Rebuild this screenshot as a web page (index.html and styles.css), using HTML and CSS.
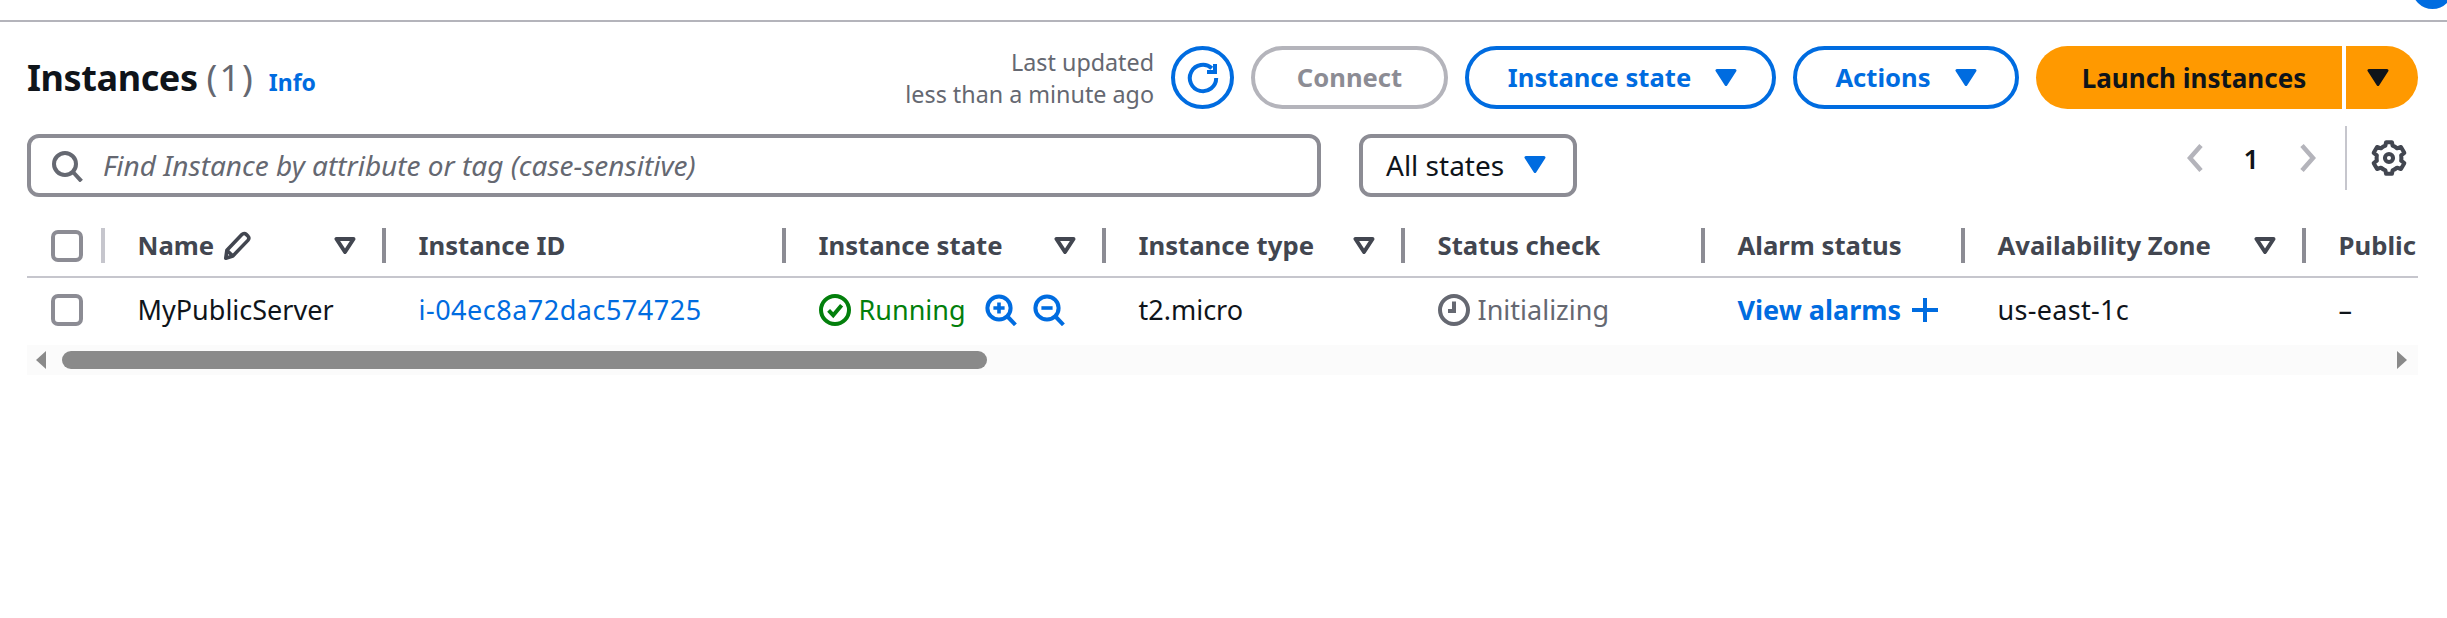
FILE: index.html
```html
<!DOCTYPE html>
<html lang="en">
<head>
  <meta charset="UTF-8" />
  <title>Instances</title>
  <link rel="stylesheet" href="styles.css">
</head>
<body>

  <div class="topbar"><span class="avatar"></span></div>

  <svg class="defs" aria-hidden="true">
    <symbol id="caret" viewBox="0 0 22 17"><path d="M2 1.5h18L11 15.5z" fill="currentColor" stroke="currentColor" stroke-width="3" stroke-linejoin="round"/></symbol>
    <symbol id="sort" viewBox="0 0 22 17"><path d="M2.5 2h17L11 15z" fill="none" stroke="currentColor" stroke-width="4" stroke-linejoin="round"/></symbol>
    <symbol id="check" viewBox="0 0 32 32"><rect x="2" y="2" width="28" height="28" rx="5" fill="#fff" stroke="currentColor" stroke-width="4"/></symbol>
  </svg>

  <main class="panel">
    <div class="head-row">
      <h1 class="title">Instances <span class="count">(1)</span><a class="info">Info</a></h1>
      <div class="actions">
        <div class="updated">Last updated<br>less than a minute ago</div>
        <button class="btn btn-round">
          <svg viewBox="0 0 16 16" width="32" height="32" fill="none" stroke="currentColor" stroke-width="2"><path d="M14.6 8a6.6 6.6 0 1 1-2.2-4.9"/><path d="M14 1v4h-4"/></svg>
        </button>
        <button class="btn btn-off w-connect">Connect</button>
        <button class="btn w-state">Instance state <svg class="caret"><use href="#caret"/></svg></button>
        <button class="btn w-actions">Actions <svg class="caret"><use href="#caret"/></svg></button>
        <div class="split">
          <button class="btn-primary w-launch">Launch instances</button>
          <button class="btn-primary w-drop"><svg class="caret"><use href="#caret"/></svg></button>
        </div>
      </div>
    </div>

    <div class="filter-row">
      <div class="search">
        <svg viewBox="0 0 16 16" width="32" height="32" fill="none" stroke="currentColor" stroke-width="2"><circle cx="7" cy="7" r="5.5"/><path d="M11 11l4.2 4.6"/></svg>
        <span>Find Instance by attribute or tag (case-sensitive)</span>
      </div>
      <div class="select">All states <svg class="caret"><use href="#caret"/></svg></div>
      <div class="pager">
        <svg class="chev" viewBox="0 0 16 28" fill="none" stroke="currentColor" stroke-width="4.5"><path d="M14 1.5L3 14l11 12.5"/></svg>
        <span class="page-num">1</span>
        <svg class="chev" viewBox="0 0 16 28" fill="none" stroke="currentColor" stroke-width="4.5"><path d="M2 1.5L13 14 2 26.5"/></svg>
        <span class="pager-line"></span>
        <svg class="gear" viewBox="0 0 16 16" width="36" height="36" fill="none" stroke="currentColor" stroke-width="1.8" stroke-linejoin="round"><path d="M13.5 8c0-.4 0-.8-.1-1.2l1.4-1.1-1.5-2.6-1.7.6c-.6-.5-1.3-.9-2-1.2L9.3 1H6.7l-.3 1.5c-.7.3-1.4.7-2 1.2l-1.7-.6-1.5 2.6 1.4 1.1c-.1.4-.1.8-.1 1.2s0 .8.1 1.2l-1.4 1.1 1.5 2.6 1.7-.6c.6.5 1.3.9 2 1.2l.3 1.5h2.6l.3-1.5c.7-.3 1.4-.7 2-1.2l1.7.6 1.5-2.6-1.4-1.1c.1-.4.1-.8.1-1.2z"/><circle cx="8" cy="8" r="1.8"/></svg>
      </div>
    </div>

    <table class="grid">
      <colgroup>
        <col class="c-check"><col class="c-name"><col class="c-id"><col class="c-state"><col class="c-type"><col class="c-status"><col class="c-alarm"><col class="c-zone"><col class="c-public">
      </colgroup>
      <thead>
        <tr>
          <th><div class="th first"><svg class="box"><use href="#check"/></svg></div></th>
          <th><div class="th">Name
            <svg class="pencil" viewBox="0 0 16 16" width="30" height="30" fill="none" stroke="currentColor" stroke-width="1.9" stroke-linejoin="round"><path d="M2 14.5l.6-4.2 8-8.4c.7-.7 1.7-.7 2.3-.1l.9.9c.6.6.6 1.6 0 2.3l-8 8.3z"/><path d="M2.7 10.4l3.1 3"/></svg>
            <svg class="sort"><use href="#sort"/></svg></div></th>
          <th><div class="th">Instance ID</div></th>
          <th><div class="th">Instance state <svg class="sort"><use href="#sort"/></svg></div></th>
          <th><div class="th">Instance type <svg class="sort"><use href="#sort"/></svg></div></th>
          <th><div class="th">Status check</div></th>
          <th><div class="th">Alarm status</div></th>
          <th><div class="th">Availability Zone <svg class="sort"><use href="#sort"/></svg></div></th>
          <th><div class="th last">Public</div></th>
        </tr>
      </thead>
      <tbody>
        <tr>
          <td><svg class="box"><use href="#check"/></svg></td>
          <td>MyPublicServer</td>
          <td><a class="link">i-04ec8a72dac574725</a></td>
          <td>
            <div class="cell running">
              <svg viewBox="0 0 16 16" width="32" height="32" fill="none" stroke="currentColor" stroke-width="2"><circle cx="8" cy="8" r="7"/><path d="M4.8 8.2l2.3 2.4 4.2-5"/></svg>
              <span class="running-text">Running</span>
              <svg class="zoom-in" viewBox="0 0 16 16" width="32" height="32" fill="none" stroke="#006ce0" stroke-width="2"><circle cx="7" cy="7" r="5.8"/><path d="M11 11l4.2 4.4"/><path d="M4.2 7h5.6M7 4.2v5.6" stroke-width="1.8"/></svg>
              <svg class="zoom-out" viewBox="0 0 16 16" width="32" height="32" fill="none" stroke="#006ce0" stroke-width="2"><circle cx="7" cy="7" r="5.8"/><path d="M11 11l4.2 4.4"/><path d="M4.2 7h5.6" stroke-width="1.8"/></svg>
            </div>
          </td>
          <td>t2.micro</td>
          <td>
            <div class="cell pending">
              <svg viewBox="0 0 16 16" width="32" height="32" fill="none" stroke="currentColor" stroke-width="2"><circle cx="8" cy="8" r="7"/><path d="M8 3.8v4.7H5"/></svg>
              <span>Initializing</span>
            </div>
          </td>
          <td>
            <div class="cell alarms">View alarms
              <svg viewBox="0 0 26 24" width="26" height="24" fill="none" stroke="currentColor" stroke-width="4"><path d="M0 12h26M13 0v24"/></svg>
            </div>
          </td>
          <td class="zone">us-east-1c</td>
          <td>–</td>
        </tr>
      </tbody>
    </table>

    <div class="scrollbar">
      <span class="arrow arrow-left"></span>
      <span class="thumb"></span>
      <span class="arrow arrow-right"></span>
    </div>
  </main>

</body>
</html>
```
FILE: styles.css
```css
* {
  box-sizing: border-box;
}

html, body {
  height: 100%;
}

body {
  margin: 0;
  background: #fff;
  color: #0f141a;
  font-family: "Noto Sans", "Open Sans", sans-serif;
  font-size: 27px;
  overflow: hidden;
}

.defs {
  position: absolute;
  width: 0;
  height: 0;
}

.topbar {
  height: 22px;
  border-bottom: 2px solid #b4b4bb;
  position: relative;
  overflow: hidden;
}

.avatar {
  position: absolute;
  left: 2412px;
  top: -32px;
  width: 41px;
  height: 41px;
  border-radius: 50%;
  background: #006ce0;
}

.panel {
  padding: 24px 29px 0 27px;
}

/* first row */
.head-row {
  display: flex;
  align-items: center;
  height: 63px;
}

.title {
  margin: 0;
  font-size: 36px;
  font-weight: 700;
  letter-spacing: -0.4px;
  white-space: nowrap;
}

.count {
  font-weight: 400;
  letter-spacing: 2px;
  color: #656871;
}

.info {
  margin-left: 14px;
  font-size: 23px;
  letter-spacing: 0;
  color: #006ce0;
}

.actions {
  margin-left: auto;
  display: flex;
  align-items: center;
  gap: 17px;
}

.updated {
  text-align: right;
  font-size: 23.3px;
  line-height: 32px;
  color: #656871;
}

button {
  font: inherit;
}

.btn {
  height: 63px;
  border: 4px solid #006ce0;
  border-radius: 32px;
  background: #fff;
  color: #006ce0;
  font-weight: 700;
  font-size: 25.6px;
  display: flex;
  align-items: center;
  justify-content: center;
  gap: 24px;
  padding: 0;
}

.btn-round {
  width: 63px;
  border-radius: 50%;
}

.btn-off {
  border-color: #b4b4bb;
  color: #8c8c94;
}

.w-connect { width: 197px; }
.w-state { width: 311px; padding-left: 4px; }
.w-actions { width: 226px; }

.caret {
  width: 22px;
  height: 17px;
  flex: none;
}

.split {
  display: flex;
  gap: 4px;
}

.btn-primary {
  height: 63px;
  border: 0;
  background: #ff9900;
  color: #0f141a;
  font-weight: 700;
  font-size: 26px;
  padding: 0;
  display: flex;
  align-items: center;
  justify-content: center;
}

.w-launch {
  width: 306px;
  padding-left: 10px;
  border-radius: 32px 0 0 32px;
}

.w-drop {
  width: 72px;
  padding-right: 8px;
  border-radius: 0 32px 32px 0;
}

/* second row */
.filter-row {
  display: flex;
  margin-top: 17px;
  height: 71px;
}

.search {
  margin-top: 8px;
  width: 1294px;
  height: 63px;
  border: 4px solid #8c8c94;
  border-radius: 12px;
  display: flex;
  align-items: center;
  gap: 20px;
  padding-left: 20px;
  color: #656871;
}

.search span {
  padding-bottom: 2px;
  font-style: italic;
  font-size: 28px;
}

.select {
  margin: 8px 0 0 38px;
  width: 218px;
  height: 63px;
  border: 4px solid #8c8c94;
  border-radius: 12px;
  display: flex;
  align-items: center;
  gap: 20px;
  padding: 0 0 2px 23px;
  font-size: 28px;
  color: #0f141a;
}

.select .caret {
  color: #006ce0;
}

.pager {
  margin-left: auto;
  display: flex;
  align-items: center;
  height: 64px;
  color: #b4b4bb;
}

.chev {
  width: 16px;
  height: 28px;
}

.page-num {
  margin: 0 41px;
  color: #0f141a;
  font-weight: 600;
  font-size: 27px;
}

.pager-line {
  width: 2px;
  height: 64px;
  margin-left: 29px;
  background: #c6c6cd;
}

.gear {
  margin: 0 11px 0 24px;
  color: #424650;
}

/* table */
.grid {
  margin-top: 31px;
  width: 2391px;
  table-layout: fixed;
  border-collapse: collapse;
}

.c-check { width: 78px; }
.c-name { width: 281px; }
.c-id { width: 400px; }
.c-state { width: 320px; }
.c-type { width: 299px; }
.c-status { width: 300px; }
.c-alarm { width: 260px; }
.c-zone { width: 341px; }
.c-public { width: 112px; }

th {
  padding: 0 0 13px;
  border-bottom: 2px solid #c6c6cd;
  text-align: left;
}

.th {
  height: 35px;
  display: flex;
  align-items: center;
  padding: 0 26px 0 32.5px;
  border-right: 4px solid #8c8c94;
  color: #424650;
  font-size: 25.7px;
  font-weight: 700;
  white-space: nowrap;
}

.th.first {
  padding: 0 0 0 24px;
  border-right-color: #c6c6cd;
}

.th.last {
  border-right: 0;
  padding-right: 0;
  overflow: hidden;
}

.box {
  width: 32px;
  height: 32px;
  flex: none;
  color: #8c8c94;
  display: block;
}

.pencil {
  margin-left: 8px;
  color: #424650;
}

.sort {
  width: 22px;
  height: 17px;
  margin-left: auto;
  color: #424650;
}

td {
  height: 68px;
  padding: 0 0 4px 32.5px;
  white-space: nowrap;
  vertical-align: middle;
}

td:first-child {
  padding-left: 24px;
}

.link {
  color: #006ce0;
  letter-spacing: 0.5px;
}

.zone {
  letter-spacing: 0.3px;
}

.cell {
  display: flex;
  align-items: center;
}

.running {
  color: #037f0c;
}

.running-text {
  margin-left: 8px;
}

.zoom-in {
  margin-left: 19px;
}

.zoom-out {
  margin-left: 16px;
}

.pending {
  color: #656871;
  gap: 8px;
}

.alarms {
  color: #006ce0;
  font-weight: 700;
  gap: 11px;
}

/* scroll bar */
.scrollbar {
  height: 30px;
  background: #fbfbfb;
  display: flex;
  align-items: center;
  padding: 0 11px 0 9px;
}

.thumb {
  width: 925px;
  height: 18px;
  margin-left: 16px;
  border-radius: 9px;
  background: #8a8a8a;
}

.arrow {
  width: 0;
  height: 0;
  border-top: 9px solid transparent;
  border-bottom: 9px solid transparent;
}

.arrow-left {
  border-right: 10px solid #8a8a8a;
}

.arrow-right {
  margin-left: auto;
  border-left: 10px solid #8a8a8a;
}
```
